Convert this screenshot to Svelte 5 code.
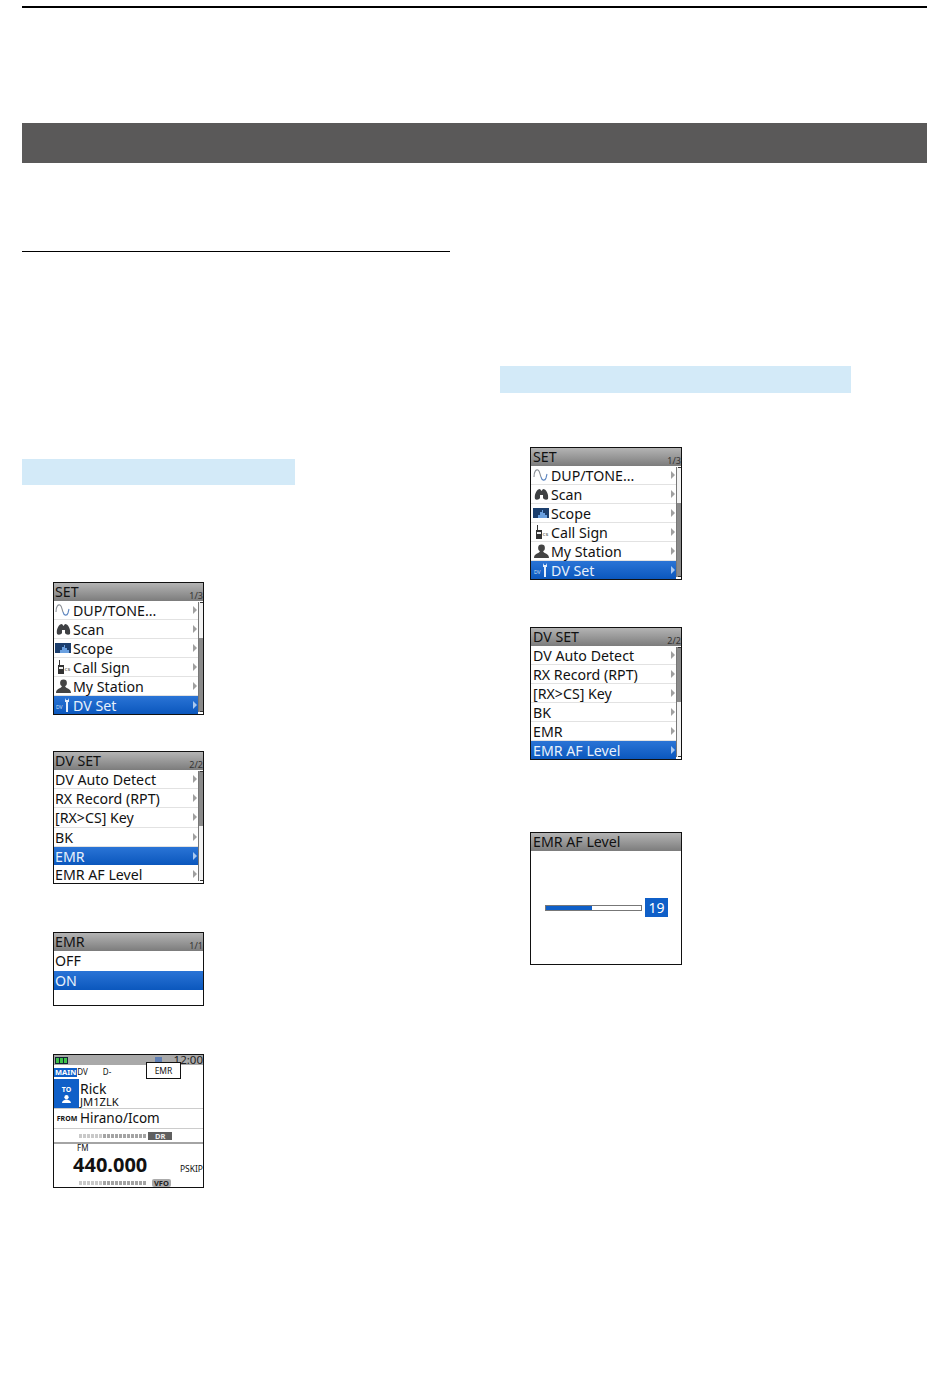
<script>
  const blue = '#0f5fc8';

  const setMenu = [
    { label: 'DUP/TONE...', icon: 'tone' },
    { label: 'Scan', icon: 'scan' },
    { label: 'Scope', icon: 'scope' },
    { label: 'Call Sign', icon: 'call' },
    { label: 'My Station', icon: 'person' },
    { label: 'DV Set', icon: 'dv', active: true }
  ];

  const dvLabels = ['DV Auto Detect', 'RX Record (RPT)', '[RX>CS] Key', 'BK', 'EMR', 'EMR AF Level'];
  const dvEmr = dvLabels.map((label) => ({ label, active: label === 'EMR' }));
  const dvLevel = dvLabels.map((label) => ({ label, active: label === 'EMR AF Level' }));

  // S-meter ticks, getting darker to the right
  const ticks = Array.from({ length: 17 }, (_, i) => (i < 6 ? '#c9c9c9' : '#a4a4a4'));
</script>

{#snippet icon(name)}
  <svg class="icon" viewBox="0 0 18 16" aria-hidden="true">
    {#if name === 'tone'}
      <path d="M1 10C1 4 3 2.500 5 3C7 4 7 8 8 10" fill="none" stroke="#8a8f96" stroke-width="1.1" />
      <path d="M8 10C9 14 12 14 13 11L14 7" fill="none" stroke="#5d86c0" stroke-width="1.1" />
    {:else if name === 'scan'}
      <path d="M2 13C1 8 4 3 7 3L8.500 5 10 3C13 3 16 8 15 13C14 14 11 14 10 12L10 9H7L7 12C6 14 3 14 2 13Z" fill="#3f4144" />
    {:else if name === 'scope'}
      <rect x="0" y="3" width="16" height="10" fill="#1c3f6e" />
      <path d="M5 13V10H7V7H9V5H10V8H12V10H14V13Z" fill="#6aa0e0" />
    {:else if name === 'call'}
      <path d="M3 6H4V1H5V6H9V15H3Z" fill="#333" />
      <rect x="4" y="8" width="4" height="2" fill="#eee" />
      <text x="9.500" y="12" class="cs-mark">cs</text>
    {:else if name === 'person'}
      <circle cx="8.500" cy="5" r="3.400" fill="#444" />
      <path d="M1 15C1 10 6 11 7 8H10C11 11 16 10 16 15Z" fill="#444" />
    {:else if name === 'dv'}
      <text x="1" y="12" class="dv-mark">DV</text>
      <path d="M10 1V5H11V15H13V5H14V1L13 3H11Z" fill="#e4eefb" />
    {/if}
  </svg>
{/snippet}

{#snippet screen(title, page, items, thumbTop, thumbHeight)}
  <div class="screen">
    <div class="titlebar"><span>{title}</span><small>{page}</small></div>
    <div class="menu">
      <ul>
        {#each items as item}
          <li class:active={item.active}>
            {#if item.icon}{@render icon(item.icon)}{/if}
            <span class="label">{item.label}</span>
            <i class="arrow"></i>
          </li>
        {/each}
      </ul>
      <div class="scrollbar">
        <div class="thumb" style="top: {thumbTop}%; height: {thumbHeight}%"></div>
      </div>
    </div>
  </div>
{/snippet}

<div class="page">
  <div class="top-rule"></div>
  <div class="band"></div>

  <div class="columns">
    <section class="left">
      <div class="rule"></div>
      <div class="tag tag-left"></div>

      <div class="shot first">{@render screen('SET', '1/3', setMenu, 0, 33)}</div>
      <div class="shot gap-36">{@render screen('DV SET', '2/2', dvEmr, 50, 50)}</div>

      <div class="shot gap-48">
        <div class="screen small">
          <div class="titlebar"><span>EMR</span><small>1/1</small></div>
          <div class="options">
            <div>OFF</div>
            <div class="active">ON</div>
            <div></div>
          </div>
        </div>
      </div>

      <div class="shot gap-48">
        <div class="screen home">
          <div class="status">
            <span class="battery"><b></b><b></b><b></b></span>
            <span class="signal"></span>
            <span class="clock">12:00</span>
          </div>
          <div class="mode">
            <span class="main">MAIN</span>
            <span class="dv">DV</span>
            <span class="d">D-</span>
          </div>
          <div class="emr-box">EMR</div>

          <div class="to-row">
            <div class="to">
              <span>TO</span>
              <svg viewBox="0 0 12 9" aria-hidden="true">
                <circle cx="6" cy="2.500" r="2.400" fill="#fff" />
                <path d="M1 9C1 6 4 6 5 5H7C8 6 11 6 11 9Z" fill="#fff" />
              </svg>
            </div>
            <div class="names">
              <div class="name">Rick</div>
              <div class="sign">JM1ZLK</div>
            </div>
          </div>
          <div class="from-row">
            <span class="from">FROM</span>
            <span class="name">Hirano/Icom</span>
          </div>
          <div class="meter-row">
            <span class="ticks">{#each ticks as c}<i style="background: {c}"></i>{/each}</span>
            <span class="chip">DR</span>
          </div>
          <div class="vfo">
            <div class="fm">FM</div>
            <div class="freq-row">
              <span class="freq">440.000</span>
              <span class="pskip">PSKIP</span>
            </div>
            <div class="meter-row bottom">
              <span class="ticks">{#each ticks as c}<i style="background: {c}"></i>{/each}</span>
              <span class="chip light">VFO</span>
            </div>
          </div>
        </div>
      </div>
    </section>

    <section class="right">
      <div class="tag tag-right"></div>

      <div class="shot first-right">{@render screen('SET', '1/3', setMenu, 0, 33)}</div>
      <div class="shot gap-47">{@render screen('DV SET', '2/2', dvLevel, 50, 50)}</div>

      <div class="shot gap-72">
        <div class="screen level">
          <div class="titlebar"><span>EMR AF Level</span></div>
          <div class="level-body">
            <div class="bar"><div class="fill" style="width: 48%; background: {blue}"></div></div>
            <div class="value">19</div>
          </div>
        </div>
      </div>
    </section>
  </div>
</div>

<style>
  :global(body) {
    background: #fff;
  }

  .page {
    box-sizing: border-box;
    width: 950px;
    height: 1387px;
    padding: 6px 23px 0 22px;
    overflow: hidden;
    font-family: "Noto Sans", "Open Sans", sans-serif;
    color: #111;
  }

  .top-rule {
    height: 2px;
    background: #000;
  }

  .band {
    height: 40px;
    margin-top: 115px;
    background: #5a5959;
  }

  .columns {
    display: grid;
    grid-template-columns: 428px 351px;
    column-gap: 50px;
  }

  .left {
    padding-top: 88px;
  }

  .right {
    padding-top: 203px;
  }

  .rule {
    height: 1px;
    background: #000;
  }

  .tag {
    background: #d3eaf8;
  }

  .tag-left {
    width: 273px;
    height: 26px;
    margin-top: 207px;
  }

  .tag-right {
    height: 27px;
  }

  .left .shot {
    margin-left: 31px;
  }

  .right .shot {
    margin-left: 30px;
  }

  .first {
    margin-top: 97px;
  }

  .first-right {
    margin-top: 54px;
  }

  .gap-36 {
    margin-top: 36px;
  }

  .gap-47 {
    margin-top: 47px;
  }

  .gap-48 {
    margin-top: 48px;
  }

  .gap-72 {
    margin-top: 72px;
  }

  .screen {
    position: relative;
    box-sizing: border-box;
    display: flex;
    flex-direction: column;
    width: 151px;
    height: 133px;
    border: 1px solid #111;
    background: #fff;
    overflow: hidden;
    font-size: 14.2px;
    line-height: 18px;
  }

  .right .screen {
    width: 152px;
  }

  .titlebar {
    flex: none;
    display: flex;
    justify-content: space-between;
    height: 18px;
    padding-left: 1px;
    background: linear-gradient(#b4b4b4, #7c7c7c);
  }

  .right .titlebar,
  .right li {
    padding-left: 2px;
  }

  .titlebar small {
    align-self: flex-end;
    font-size: 9px;
    line-height: 11px;
    color: #333;
  }

  .menu {
    flex: 1;
    display: flex;
    min-height: 0;
  }

  ul {
    flex: 1;
    display: flex;
    flex-direction: column;
    margin: 0;
    padding: 0;
    list-style: none;
  }

  li {
    flex: 1;
    display: flex;
    align-items: center;
    min-height: 0;
    padding-left: 1px;
    border-bottom: 1px solid #e2e2e2;
  }

  li:last-child {
    border-bottom: 0;
  }

  li.active {
    background: linear-gradient(#2a74d6, #0b57bd);
    color: #e8f1fc;
    border-bottom: 0;
  }

  .icon {
    flex: none;
    width: 18px;
    height: 16px;
  }

  .dv-mark {
    font-size: 5px;
    fill: #cfe0f7;
  }

  .cs-mark {
    font-size: 6px;
    fill: #555;
  }

  .label {
    flex: 1;
    margin-top: 2px;
    line-height: 16px;
    white-space: nowrap;
  }

  .arrow {
    flex: none;
    width: 0;
    height: 0;
    margin-right: 1px;
    border-left: 4px solid #a0a0a0;
    border-top: 4px solid transparent;
    border-bottom: 4px solid transparent;
  }

  li.active .arrow {
    border-left-color: #a9c8ef;
  }

  .scrollbar {
    position: relative;
    flex: none;
    box-sizing: border-box;
    width: 5px;
    margin: 1px 0 2px;
    background: #8a8a8a;
    border-left: 1px solid #777;
  }

  .scrollbar::before,
  .scrollbar::after {
    content: "";
    position: absolute;
    z-index: 1;
    left: 1px;
    right: 0;
    height: 1px;
    background: #333;
  }

  .scrollbar::before {
    top: 0;
  }

  .scrollbar::after {
    bottom: 0;
  }

  .thumb {
    position: absolute;
    left: 0;
    right: 0;
    background: #f2f2f2;
  }

  .small {
    height: 74px;
  }

  .options {
    flex: 1;
    display: grid;
    grid-template-rows: 19px 19px 1fr;
    row-gap: 1px;
  }

  .options div {
    padding-left: 1px;
    line-height: 20px;
  }

  .options .active {
    background: linear-gradient(#2a74d6, #0b57bd);
    color: #e8f1fc;
  }

  .home {
    height: 134px;
    font-size: 13.5px;
  }

  .status {
    flex: none;
    display: flex;
    align-items: center;
    height: 10px;
    background: #a9a9a9;
  }

  .battery {
    display: flex;
    gap: 1px;
    margin-left: 1px;
    padding: 1px;
    background: #123;
  }

  .battery b {
    width: 3px;
    height: 5px;
    background: #3fc24a;
  }

  .signal {
    width: 7px;
    height: 6px;
    margin-left: 87px;
    background: #5f7fb4;
  }

  .clock {
    margin-left: auto;
    font-size: 11.500px;
    line-height: 10px;
    color: #222;
  }

  .mode {
    flex: none;
    display: flex;
    align-items: center;
    height: 14px;
    font-size: 8px;
    line-height: 14px;
  }

  .main {
    padding: 0 1px;
    background: #0f5fc8;
    color: #fff;
    font-size: 7.500px;
    line-height: 9px;
    font-weight: 700;
  }

  .d {
    margin-left: 15px;
  }

  .emr-box {
    position: absolute;
    left: 92px;
    top: 7px;
    box-sizing: border-box;
    width: 35px;
    height: 17px;
    border: 1px solid #111;
    background: #fff;
    font-size: 8.500px;
    line-height: 15px;
    text-align: center;
  }

  .to-row {
    flex: none;
    display: flex;
    height: 29px;
    border-bottom: 1px solid #ccc;
  }

  .to {
    flex: none;
    display: flex;
    flex-direction: column;
    align-items: center;
    justify-content: center;
    width: 25px;
    background: #0f5fc8;
    color: #fff;
    font-size: 7px;
    line-height: 10px;
    font-weight: 700;
  }

  .to svg {
    width: 11px;
    height: 8px;
  }

  .names {
    margin-left: 1px;
    padding-top: 2px;
  }

  .names .name {
    font-size: 14px;
    line-height: 15px;
  }

  .sign {
    font-size: 11.200px;
    line-height: 11px;
  }

  .from-row {
    flex: none;
    display: flex;
    align-items: center;
    height: 19px;
    border-bottom: 1px solid #ccc;
  }

  .from {
    width: 26px;
    font-size: 7px;
    font-weight: 700;
    text-align: center;
  }

  .from-row .name {
    padding-bottom: 2px;
    font-size: 13.500px;
  }

  .meter-row {
    flex: none;
    display: flex;
    align-items: center;
    height: 13px;
    padding-left: 25px;
  }

  .ticks {
    display: flex;
    gap: 1px;
    width: 67px;
  }

  .ticks i {
    width: 3px;
    height: 4px;
  }

  .chip {
    margin-left: 2px;
    padding: 0 7px;
    background: #5f5f5f;
    color: #eee;
    font-size: 7.500px;
    line-height: 8px;
    font-weight: 700;
  }

  .chip.light {
    margin-left: 6px;
    padding: 0 2px;
    background: #aaa;
    color: #222;
    border-radius: 2px;
  }

  .vfo {
    flex: 1;
    min-height: 0;
    border-top: 2px solid #a4a4a4;
  }

  .fm {
    padding-left: 23px;
    font-size: 8px;
    line-height: 7px;
  }

  .freq-row {
    display: flex;
    align-items: baseline;
    justify-content: space-between;
    height: 27px;
    padding-left: 19px;
  }

  .freq {
    font-size: 20px;
    line-height: 27px;
    font-weight: 700;
    color: #111;
  }

  .pskip {
    font-size: 8.500px;
    white-space: nowrap;
  }

  .bottom {
    height: 9px;
  }

  .level-body {
    flex: 1;
    display: flex;
    align-items: center;
    padding-left: 14px;
  }

  .bar {
    box-sizing: border-box;
    width: 97px;
    height: 6px;
    border: 1px solid #777;
    background: #fff;
  }

  .fill {
    height: 100%;
  }

  .value {
    width: 23px;
    height: 19px;
    margin-left: 3px;
    background: #0f5fc8;
    color: #fff;
    font-size: 14px;
    line-height: 19px;
    text-align: center;
  }
</style>
